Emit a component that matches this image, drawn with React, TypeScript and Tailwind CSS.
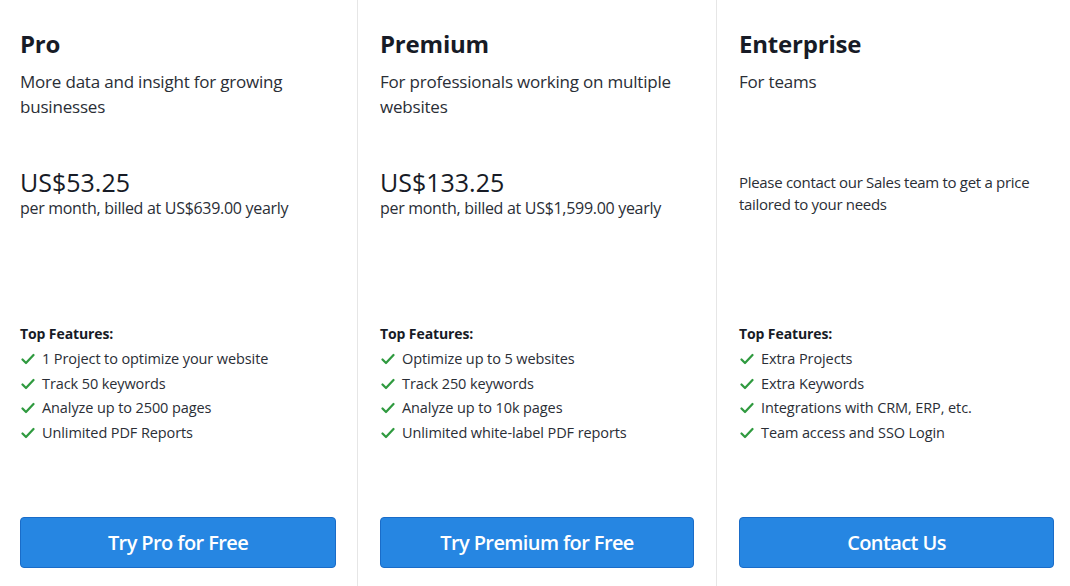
const PLANS = [
  {
    name: 'Pro',
    desc: 'More data and insight for growing businesses',
    price: 'US$53.25',
    billed: 'per month, billed at US$639.00 yearly',
    features: [
      '1 Project to optimize your website',
      'Track 50 keywords',
      'Analyze up to 2500 pages',
      'Unlimited PDF Reports',
    ],
    cta: 'Try Pro for Free',
  },
  {
    name: 'Premium',
    desc: 'For professionals working on multiple websites',
    price: 'US$133.25',
    billed: 'per month, billed at US$1,599.00 yearly',
    features: [
      'Optimize up to 5 websites',
      'Track 250 keywords',
      'Analyze up to 10k pages',
      'Unlimited white-label PDF reports',
    ],
    cta: 'Try Premium for Free',
  },
  {
    name: 'Enterprise',
    desc: 'For teams',
    contact: 'Please contact our Sales team to get a price tailored to your needs',
    features: [
      'Extra Projects',
      'Extra Keywords',
      'Integrations with CRM, ERP, etc.',
      'Team access and SSO Login',
    ],
    cta: 'Contact Us',
  },
];

function Check() {
  return (
    <svg width="14" height="12" viewBox="0 0 14 12" className="shrink-0">
      <polyline points="1.5,6.5 5,10 12.5,2" fill="none" stroke="#2f9a3f" strokeWidth="2.2" strokeLinecap="round" strokeLinejoin="round" />
    </svg>
  );
}

type Plan = (typeof PLANS)[number] & { price?: string; billed?: string; contact?: string };

function PlanColumn({ plan, className }: { plan: Plan; className: string }) {
  return (
    <div className={`flex h-[586px] flex-col pt-[28px] pb-[18px] ${className}`}>
      <h2 className="h-[32px] text-[24px] leading-[32px] font-bold tracking-[-0.2px] text-[#171b26]">{plan.name}</h2>
      <p className="mt-[9px] h-[50px] text-[17px] leading-[25px] tracking-[-0.2px] text-[#2a2e36]">{plan.desc}</p>
      <div className="mt-[48px] h-[157px]">
        {plan.price ? (
          <>
            <div className="text-[25px] leading-[30px] font-medium text-[#171b26]">{plan.price}</div>
            <div className="text-[16px] leading-[22px] tracking-[-0.3px] text-[#2a2e36]">{plan.billed}</div>
          </>
        ) : (
          <p className="pt-[4px] text-[15px] leading-[22px] tracking-[-0.3px] text-[#2a2e36]">{plan.contact}</p>
        )}
      </div>
      <div className="text-[14px] leading-[20px] font-bold tracking-[-0.1px] text-[#171b26]">Top Features:</div>
      <ul className="mt-[3px]">
        {plan.features.map((f) => (
          <li key={f} className="flex items-center gap-[7px] pl-[1px] text-[14.5px] leading-[24.6px] tracking-[-0.1px] text-[#2a2e36]">
            <Check />
            {f}
          </li>
        ))}
      </ul>
      <button className="mt-auto h-[51px] w-full rounded-[4px] border border-[#1a6cc8] bg-[#2686e2] text-[20px] font-semibold tracking-[-0.6px] text-white">
        {plan.cta}
      </button>
    </div>
  );
}

export default function App() {
  return (
    <div className="flex h-[586px] w-[1070px] overflow-hidden bg-white font-['Open_Sans',sans-serif]">
      <PlanColumn plan={PLANS[0] as Plan} className="w-[358px] shrink-0 border-r border-[#e6e6e6] pl-[20px] pr-[21px]" />
      <PlanColumn plan={PLANS[1] as Plan} className="w-[359px] shrink-0 border-r border-[#e6e6e6] pl-[22px] pr-[22px]" />
      <PlanColumn plan={PLANS[2] as Plan} className="flex-1 pl-[22px] pr-[16px]" />
    </div>
  );
}
